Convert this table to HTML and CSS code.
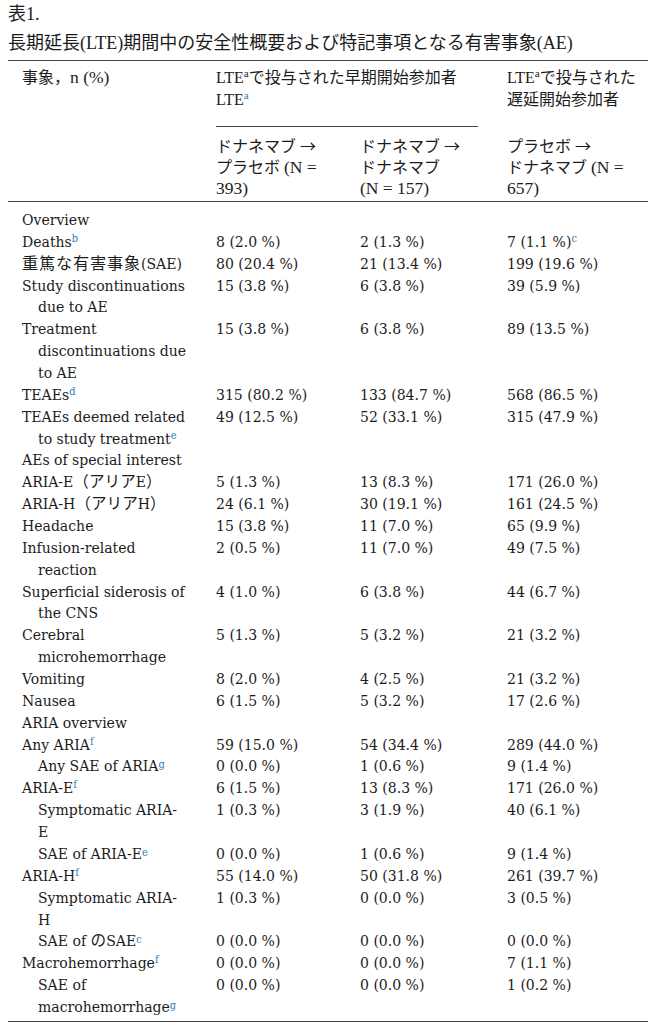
FILE: index.html
```html
<!DOCTYPE html>
<html lang="ja">
<head>
<meta charset="utf-8">
<title>表1</title>
<link rel="stylesheet" href="styles.css">
</head>
<body>
<div class="title">
  <div>表1.</div>
  <div>長期延長(LTE)期間中の安全性概要および特記事項となる有害事象(AE)</div>
</div>
<table class="ae">
  <colgroup><col class="c1"><col class="c2"><col class="c3"><col class="c4"></colgroup>
  <thead>
    <tr class="h1">
      <th rowspan="2" class="lab">事象，<span class="lt">n (%)</span></th>
      <th colspan="2" class="grp"><div class="grp-in">LTE<sup>a</sup>で投与された早期開始参加者<br>LTE<sup class="ref">a</sup></div></th>
      <th>LTE<sup>a</sup>で投与された<br>遅延開始参加者</th>
    </tr>
    <tr class="h2">
      <th>ドナネマブ <span class="arr">→</span><br>プラセボ <span class="lt">(N =</span><br><span class="lt">393)</span></th>
      <th>ドナネマブ <span class="arr">→</span><br>ドナネマブ<br><span class="lt">(N = 157)</span></th>
      <th>プラセボ <span class="arr">→</span><br>ドナネマブ <span class="lt">(N =</span><br><span class="lt">657)</span></th>
    </tr>
  </thead>
  <tbody>
    <tr><td class="lab">Overview</td><td></td><td></td><td></td></tr>
    <tr><td class="lab">Deaths<sup class="ref">b</sup></td><td>8 (2.0 %)</td><td>2 (1.3 %)</td><td>7 (1.1 %)<sup class="ref">c</sup></td></tr>
    <tr><td class="lab"><span class="ja-big">重篤な有害事象</span>(SAE)</td><td>80 (20.4 %)</td><td>21 (13.4 %)</td><td>199 (19.6 %)</td></tr>
    <tr><td class="lab">Study discontinuations<br>due to AE</td><td>15 (3.8 %)</td><td>6 (3.8 %)</td><td>39 (5.9 %)</td></tr>
    <tr><td class="lab">Treatment<br>discontinuations due<br>to AE</td><td>15 (3.8 %)</td><td>6 (3.8 %)</td><td>89 (13.5 %)</td></tr>
    <tr><td class="lab">TEAEs<sup class="ref">d</sup></td><td>315 (80.2 %)</td><td>133 (84.7 %)</td><td>568 (86.5 %)</td></tr>
    <tr><td class="lab">TEAEs deemed related<br>to study treatment<sup class="ref">e</sup></td><td>49 (12.5 %)</td><td>52 (33.1 %)</td><td>315 (47.9 %)</td></tr>
    <tr><td class="lab">AEs of special interest</td><td></td><td></td><td></td></tr>
    <tr><td class="lab">ARIA-E<span class="ja">（アリア</span>E<span class="ja">）</span></td><td>5 (1.3 %)</td><td>13 (8.3 %)</td><td>171 (26.0 %)</td></tr>
    <tr><td class="lab">ARIA-H<span class="ja">（アリア</span>H<span class="ja">）</span></td><td>24 (6.1 %)</td><td>30 (19.1 %)</td><td>161 (24.5 %)</td></tr>
    <tr><td class="lab">Headache</td><td>15 (3.8 %)</td><td>11 (7.0 %)</td><td>65 (9.9 %)</td></tr>
    <tr><td class="lab">Infusion-related<br>reaction</td><td>2 (0.5 %)</td><td>11 (7.0 %)</td><td>49 (7.5 %)</td></tr>
    <tr><td class="lab">Superficial siderosis of<br>the CNS</td><td>4 (1.0 %)</td><td>6 (3.8 %)</td><td>44 (6.7 %)</td></tr>
    <tr><td class="lab">Cerebral<br>microhemorrhage</td><td>5 (1.3 %)</td><td>5 (3.2 %)</td><td>21 (3.2 %)</td></tr>
    <tr><td class="lab">Vomiting</td><td>8 (2.0 %)</td><td>4 (2.5 %)</td><td>21 (3.2 %)</td></tr>
    <tr><td class="lab">Nausea</td><td>6 (1.5 %)</td><td>5 (3.2 %)</td><td>17 (2.6 %)</td></tr>
    <tr><td class="lab">ARIA overview</td><td></td><td></td><td></td></tr>
    <tr><td class="lab">Any ARIA<sup class="ref">f</sup></td><td>59 (15.0 %)</td><td>54 (34.4 %)</td><td>289 (44.0 %)</td></tr>
    <tr><td class="sub">Any SAE of ARIA<sup class="ref lo">g</sup></td><td>0 (0.0 %)</td><td>1 (0.6 %)</td><td>9 (1.4 %)</td></tr>
    <tr><td class="lab">ARIA-E<sup class="ref">f</sup></td><td>6 (1.5 %)</td><td>13 (8.3 %)</td><td>171 (26.0 %)</td></tr>
    <tr><td class="sub">Symptomatic ARIA-<br>E</td><td>1 (0.3 %)</td><td>3 (1.9 %)</td><td>40 (6.1 %)</td></tr>
    <tr><td class="sub">SAE of ARIA-E<sup class="ref lo">e</sup></td><td>0 (0.0 %)</td><td>1 (0.6 %)</td><td>9 (1.4 %)</td></tr>
    <tr><td class="lab">ARIA-H<sup class="ref">f</sup></td><td>55 (14.0 %)</td><td>50 (31.8 %)</td><td>261 (39.7 %)</td></tr>
    <tr><td class="sub">Symptomatic ARIA-<br>H</td><td>1 (0.3 %)</td><td>0 (0.0 %)</td><td>3 (0.5 %)</td></tr>
    <tr><td class="sub">SAE of <span class="ja">の</span>SAE<sup class="ref lo">c</sup></td><td>0 (0.0 %)</td><td>0 (0.0 %)</td><td>0 (0.0 %)</td></tr>
    <tr><td class="lab">Macrohemorrhage<sup class="ref">f</sup></td><td>0 (0.0 %)</td><td>0 (0.0 %)</td><td>7 (1.1 %)</td></tr>
    <tr><td class="sub">SAE of<br>macrohemorrhage<sup class="ref lo">g</sup></td><td>0 (0.0 %)</td><td>0 (0.0 %)</td><td>1 (0.2 %)</td></tr>
  </tbody>
</table>
</body>
</html>
```

FILE: styles.css
```css
html, body {
  background: #ffffff;
}
body {
  margin: 0;
  padding: 0 8px;
  color: #1c1c1c;
}
.title {
  font-family: "Liberation Serif", "Noto Sans CJK JP", serif;
  font-size: 18px;
  line-height: 29px;
  white-space: nowrap;
}
.ae {
  width: 640px;
  table-layout: fixed;
  border-collapse: collapse;
  margin-top: 2px;
  border-top: 1.5px solid #444;
  border-bottom: 1.5px solid #444;
}
.c1 { width: 200px; }
.c2 { width: 144px; }
.c3 { width: 147px; }
.c4 { width: 149px; }

.ae th {
  font-family: "Liberation Serif", "Noto Sans CJK JP", serif;
  font-size: 16px;
  font-weight: 400;
  line-height: 21.5px;
  text-align: left;
  vertical-align: top;
  padding: 0 0 0 8px;
  white-space: nowrap;
}
.ae th.lab {
  padding-left: 14px;
  border-bottom: 1.5px solid #444;
}
.ae .h1 th {
  padding-top: 6px;
}
.ae th.grp {
  padding-right: 21px;
}
.grp-in {
  padding-bottom: 16px;
  border-bottom: 1.5px solid #444;
}
.ae .h2 th {
  padding-top: 8px;
  padding-bottom: 2px;
  line-height: 21px;
  border-bottom: 1.5px solid #444;
}
.lt {
  font-size: 17.5px;
}
.arr {
  font-family: "Noto Sans CJK JP", sans-serif;
  font-size: 16px;
}

.ae td {
  font-family: "DejaVu Serif Condensed", "DejaVu Serif", "Noto Sans CJK JP", serif;
  font-stretch: semi-condensed;
  font-size: 15.6px;
  line-height: 21.86px;
  text-align: left;
  vertical-align: top;
  padding: 0 0 0 8px;
  white-space: nowrap;
}
.ae td.lab {
  padding-left: 30px;
  text-indent: -16px;
}
.ae td.sub {
  padding-left: 30px;
  text-indent: 0;
}
.ae tbody tr:first-child td {
  padding-top: 8px;
}
.ae tbody tr:last-child td {
  padding-bottom: 2px;
}
.ja-big {
  font-family: "Noto Sans CJK JP", sans-serif;
  font-size: 16.2px;
  letter-spacing: 0.8px;
  line-height: 0;
}
.ja {
  font-family: "Noto Sans CJK JP", sans-serif;
  line-height: 0;
}
sup {
  font-size: 0.7em;
  line-height: 0;
  vertical-align: 0.5em;
}
sup.ref {
  color: #2c7db4;
}
sup.lo {
  vertical-align: 0.3em;
}
```
